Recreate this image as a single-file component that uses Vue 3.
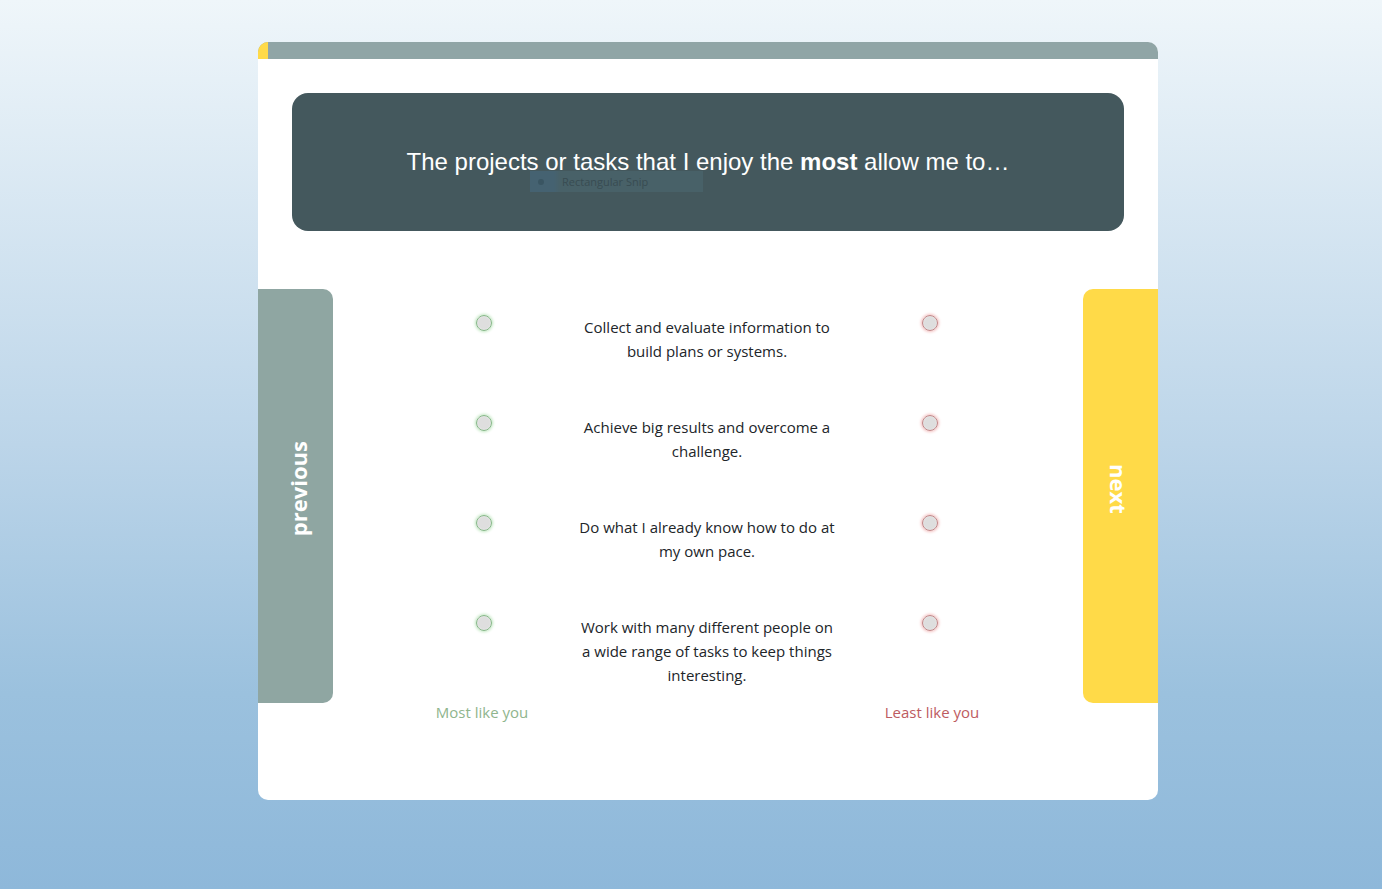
<script setup>
import { ref } from 'vue'

const statements = [
  'Collect and evaluate information to build plans or systems.',
  'Achieve big results and overcome a challenge.',
  'Do what I already know how to do at my own pace.',
  'Work with many different people on a wide range of tasks to keep things interesting.',
]
const most = ref(null)
const least = ref(null)
const progress = 1.1
</script>

<template>
  <div class="page">
    <main class="card">
      <div class="track">
        <div class="bar" :style="{ width: progress + '%' }"></div>
      </div>
      <header class="prompt">
        <div class="ghost"><i></i><span>Rectangular Snip</span></div>
        <h1>The projects or tasks that I enjoy the <strong>most</strong> allow me to…</h1>
      </header>
      <div class="stage">
        <button type="button" class="nav prev"><span>previous</span></button>
        <form class="choices">
          <div v-for="(text, i) in statements" :key="i" class="row">
            <input v-model="most" class="radio green" type="radio" name="most" :value="i" :aria-labelledby="'s' + i + ' most-label'" />
            <p :id="'s' + i">{{ text }}</p>
            <input v-model="least" class="radio red" type="radio" name="least" :value="i" :aria-labelledby="'s' + i + ' least-label'" />
          </div>
          <div class="legend">
            <span id="most-label" class="most">Most like you</span>
            <span id="least-label" class="least">Least like you</span>
          </div>
        </form>
        <button type="button" class="nav next"><span>next</span></button>
      </div>
    </main>
  </div>
</template>

<style>
body {
  margin: 0;
}
</style>

<style scoped>
.page {
  box-sizing: border-box;
  min-height: 100vh;
  padding: 42px 0 42px 34px;
  background: linear-gradient(#eff6fa, #bcd5e9 50%, #9bc1de 78%, #8eb8da);
  font-family: "Open Sans", "Noto Sans", sans-serif;
  font-size: 15px;
  line-height: 24px;
  color: #212529;
}
.card {
  max-width: 900px;
  margin: 0 auto;
  padding-bottom: 76px;
  border-radius: 10px;
  overflow: hidden;
  background: #fff;
}
.track {
  height: 17px;
  background: #90a5a6;
}
.bar {
  height: 100%;
  background: #ffda48;
}
.prompt {
  position: relative;
  margin: 34px 34px 58px;
  padding: 54px 24px;
  border-radius: 16px;
  background: #44585d;
  color: #fff;
  text-align: center;
}
h1 {
  position: relative;
  margin: 0;
  font: 400 24px/30px "Liberation Sans", Arial, sans-serif;
}
.ghost {
  position: absolute;
  left: 238px;
  top: 78px;
  display: flex;
  align-items: center;
  gap: 18px;
  box-sizing: border-box;
  width: 173px;
  height: 21px;
  padding-left: 8px;
  background: linear-gradient(90deg, #456271 24px, #486168 30px);
  color: #384c52;
  font-size: 11px;
  line-height: 20px;
}
.ghost i {
  width: 6px;
  height: 6px;
  border-radius: 50%;
  background: #3a5562;
}
.stage {
  display: grid;
  grid-template-columns: 75px 1fr 75px;
}
.nav {
  margin: 0 0 21px;
  padding: 0 4px 8px 0;
  border: 0;
  color: #fff;
  font: 700 22px/30px "Open Sans", "Noto Sans", sans-serif;
  cursor: pointer;
}
.nav span {
  display: inline-block;
  writing-mode: vertical-rl;
}
.prev {
  padding: 0 0 8px 4px;
  border-radius: 0 10px 10px 0;
  background: #8fa6a2;
}
.prev span {
  transform: rotate(180deg);
}
.next {
  border-radius: 10px 0 0 10px;
  background: #ffda48;
}
.choices {
  padding: 0 61px 0 59px;
}
.row,
.legend {
  display: grid;
  grid-template-columns: 1fr 262px 1fr;
  justify-items: center;
}
.row {
  align-items: start;
  box-sizing: border-box;
  min-height: 100px;
  padding-top: 26px;
}
.row p {
  margin: 0;
  text-align: center;
}
.radio {
  appearance: none;
  box-sizing: border-box;
  width: 16px;
  height: 16px;
  margin: 0;
  border: 1px solid;
  border-radius: 50%;
  background: radial-gradient(#dedede 50%, #e9e9e9);
}
.green {
  border-color: #85b787;
  box-shadow: 0 0 3px 1px #bfe6bf;
}
.red {
  border-color: #c28586;
  box-shadow: 0 0 3px 1px #f3bcbc;
}
.radio:checked {
  background: #45595e;
}
.legend {
  grid-template-columns: 1fr 270px 1fr;
  padding-top: 11px;
}
.most {
  color: #8fb58d;
}
.least {
  grid-column: 3;
  color: #bd5b61;
}
</style>
